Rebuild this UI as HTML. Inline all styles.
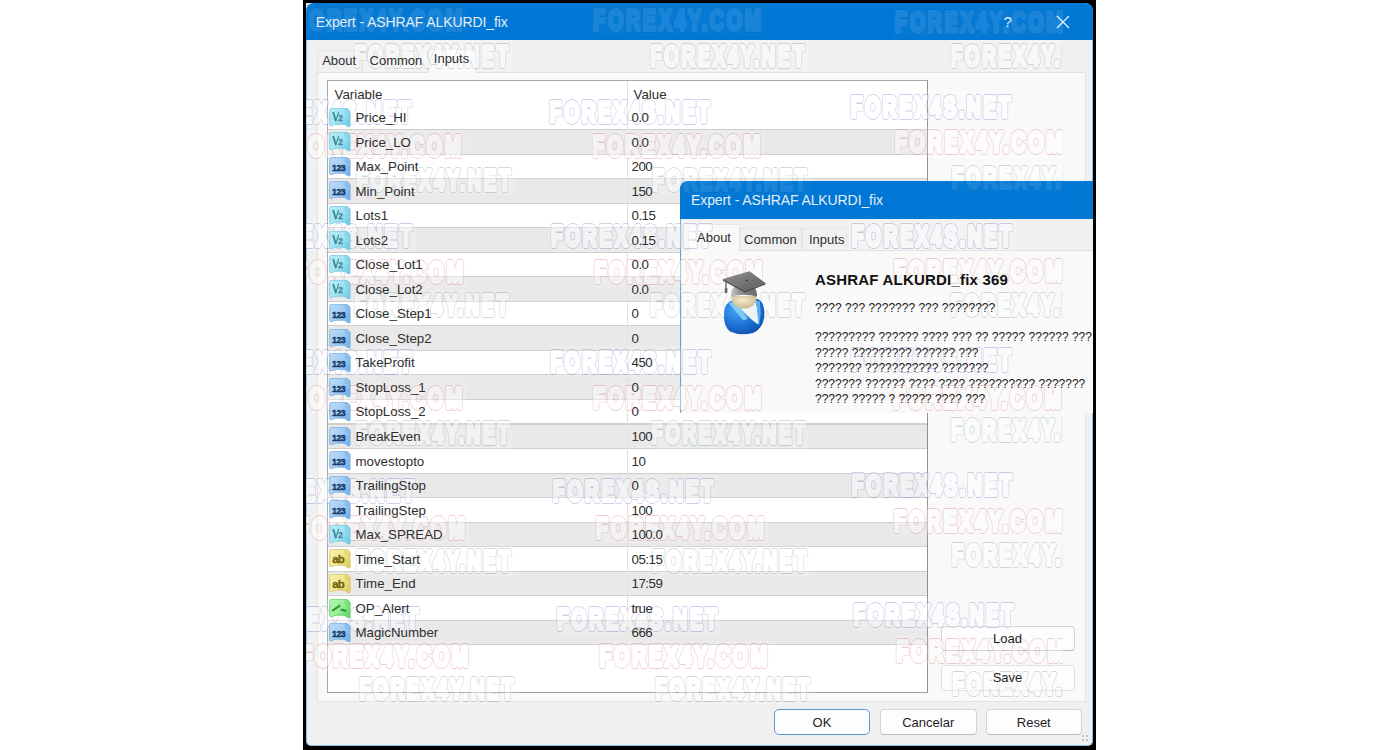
<!DOCTYPE html>
<html><head><meta charset="utf-8">
<style>
* { margin:0; padding:0; box-sizing:border-box; }
html, body { width:1400px; height:750px; overflow:hidden; background:#fff; }
body { position:relative; font-family:"Liberation Sans", sans-serif; color:#1e1e1e; }
.bg, .fg { position:absolute; }
.bg { z-index:1; }
.bg2 { position:absolute; z-index:2; }
.fg { z-index:10; white-space:nowrap; }
#frame { left:303px; top:0; width:793px; height:750px; background:#000; }
#win { left:306px; top:3px; width:787px; height:743px; background:#f0f0f0;
  border-radius:8px 8px 5px 5px; border:1px solid #86c2f2; border-top:none; }
#title { left:306px; top:3px; width:787px; height:37px; background:#0078d4; border-radius:8px 8px 0 0; }
.ttxt { font-size:14px; color:#e2eefa; letter-spacing:-0.1px; }
#page { left:316.5px; top:71.5px; width:769px; height:630.5px; background:#f9f9f9; border:1px solid #e2e2e2; }
.tab { height:22px; background:#f0f0f0; border:1px solid #e6e6e6; border-bottom:none; }
.tab.sel { background:#f9f9f9; }
.tt { font-size:13px; color:#2e2e2e; }
#table { left:326.8px; top:80px; width:601.7px; height:613px; background:#fff; border:1px solid #a8a8a8; border-right-color:#909090; border-bottom-color:#a0a0a0; }
.gr { left:327.8px; width:599.7px; background:#e9e9e9; }
.sep { left:327.8px; width:599.7px; height:1.1px; background:#cfcfcf; }
.t { font-size:13.3px; color:#2e2e2e; }
#coldiv { left:626.5px; top:81px; width:1px; height:563.5px; background:#e2e2e2; }
.btn { background:#fdfdfd; border:1px solid #d3d3d3; border-bottom-color:#bcbcbc; border-radius:4px; }
.bt { font-size:13px; color:#1e1e1e; text-align:center; }
#d2 { left:680px; top:181px; width:413px; height:232px; background:#f0f0f0; border-left:1.5px solid #5d9bd0; border-radius:8px 0 0 0; }
#d2title { left:680px; top:181px; width:413px; height:37.5px; background:#0078d4; border-radius:8px 0 0 0; }
#d2page { left:681.5px; top:249.5px; width:411.5px; height:163.5px; background:#f9f9f9; border-top:1px solid #e0e0e0; }
.q { font-size:12px; color:#1a1a1a; }
#wmsvg { position:absolute; left:0; top:0; z-index:5; pointer-events:none; }
</style></head>
<body>
<svg width="0" height="0" style="position:absolute">
 <defs>
  <linearGradient id="gh" x1="0" y1="0" x2="1" y2="0.6"><stop offset="0" stop-color="#b8eef9"/><stop offset="0.6" stop-color="#a2e3f4"/><stop offset="1" stop-color="#76cde6"/></linearGradient>
  <linearGradient id="gi" x1="0" y1="0" x2="1" y2="0.6"><stop offset="0" stop-color="#bcdcf8"/><stop offset="0.6" stop-color="#a4cdf3"/><stop offset="1" stop-color="#78b4ea"/></linearGradient>
  <linearGradient id="gs" x1="0" y1="0" x2="1" y2="0.6"><stop offset="0" stop-color="#f9f1b0"/><stop offset="0.6" stop-color="#f2e68e"/><stop offset="1" stop-color="#e2d160"/></linearGradient>
  <linearGradient id="gb" x1="0" y1="0" x2="1" y2="0.6"><stop offset="0" stop-color="#b4f6b4"/><stop offset="0.6" stop-color="#98ee98"/><stop offset="1" stop-color="#6cd86c"/></linearGradient>
 </defs>
</svg>

<div id="frame" class="bg"></div>
<div id="win" class="bg"></div>
<div class="bg" style="left:306px;top:3px;width:8px;height:8px;background:#dfe6ee"></div>
<div id="title" class="bg"></div>
<div class="fg ttxt" style="left:315.8px;top:13.5px">Expert - ASHRAF ALKURDI_fix</div>
<div class="fg ttxt" style="left:1003.5px;top:12.5px;font-size:15px">?</div>
<svg class="fg" style="left:1056px;top:14.5px" width="14" height="14" viewBox="0 0 14 14"><path d="M1 1 L13 13 M13 1 L1 13" stroke="#e6f2fc" stroke-width="1.3"/></svg>

<div id="page" class="bg"></div>
<div class="bg tab" style="left:316.5px;top:50px;width:45px"></div>
<div class="bg tab" style="left:361.5px;top:50px;width:66px"></div>
<div class="bg tab sel" style="left:427.5px;top:48.5px;width:48.5px;height:24px"></div>
<div class="fg tt" style="left:322.2px;top:53.2px">About</div>
<div class="fg tt" style="left:369.6px;top:53.2px">Common</div>
<div class="fg tt" style="left:433.8px;top:51.2px">Inputs</div>

<div id="table" class="bg"></div>
<div class="bg gr" style="top:129.23px;height:24.53px"></div>
<div class="bg gr" style="top:178.29px;height:24.53px"></div>
<div class="bg gr" style="top:227.35px;height:24.53px"></div>
<div class="bg gr" style="top:276.41px;height:24.53px"></div>
<div class="bg gr" style="top:325.47px;height:24.53px"></div>
<div class="bg gr" style="top:374.53px;height:24.53px"></div>
<div class="bg gr" style="top:423.59px;height:24.53px"></div>
<div class="bg gr" style="top:472.65px;height:24.53px"></div>
<div class="bg gr" style="top:521.71px;height:24.53px"></div>
<div class="bg gr" style="top:570.77px;height:24.53px"></div>
<div class="bg gr" style="top:619.83px;height:24.53px"></div>
<div class="bg sep" style="top:129.08px"></div>
<div class="bg sep" style="top:153.61px"></div>
<div class="bg sep" style="top:178.14px"></div>
<div class="bg sep" style="top:202.67px"></div>
<div class="bg sep" style="top:227.20px"></div>
<div class="bg sep" style="top:251.73px"></div>
<div class="bg sep" style="top:276.26px"></div>
<div class="bg sep" style="top:300.79px"></div>
<div class="bg sep" style="top:325.32px"></div>
<div class="bg sep" style="top:349.85px"></div>
<div class="bg sep" style="top:374.38px"></div>
<div class="bg sep" style="top:398.91px"></div>
<div class="bg sep" style="top:423.44px"></div>
<div class="bg sep" style="top:447.97px"></div>
<div class="bg sep" style="top:472.50px"></div>
<div class="bg sep" style="top:497.03px"></div>
<div class="bg sep" style="top:521.56px"></div>
<div class="bg sep" style="top:546.09px"></div>
<div class="bg sep" style="top:570.62px"></div>
<div class="bg sep" style="top:595.15px"></div>
<div class="bg sep" style="top:619.68px"></div>
<div class="bg sep" style="top:644.21px"></div>
<div id="coldiv" class="bg"></div>
<svg class="fg" style="left:328.80px;top:107.90px" width="22" height="20" viewBox="0 0 22 20"><path d="M0.7 2.3 Q0.7 0.3 2.7 0.3 L16.5 0.3 Q18 0.3 19.5 1.6 L20.2 2.3 Q21.1 3.2 21.1 4.8 L21.1 18 Q21.1 19.3 19.8 19 Q18 18.4 16.5 17 Q15.5 16.2 13 16.2 L8 16.2 Q5.5 16.2 4.3 17 Q3 17.9 1.8 17.8 Q0.7 17.6 0.7 16.5 Z" fill="url(#gh)" stroke="#74c6de" stroke-width="0.8"/><path d="M16.2 0.6 L16.2 4 Q16.2 5.2 17.4 5.2 L21 5.2 Q21 3.2 19.8 2 Q18.2 0.6 16.2 0.6 Z" fill="#8fd6ea" stroke="#74c6de" stroke-width="0.6" opacity="0.8"/><path d="M4.3 4.6 L6.7 12.6" stroke="#3d8a98" stroke-width="1.9" stroke-linecap="round"/><path d="M6.9 12.4 L9.6 4.4" stroke="#3d8a98" stroke-width="1.2" stroke-linecap="round"/><text x="9.2" y="12.8" font-size="8.2" font-family="Liberation Sans" fill="#3d8a98" stroke="#3d8a98" stroke-width="0.3" font-weight="bold">2</text></svg>
<div class="fg t" style="left:355.5px;top:110.10px">Price_HI</div>
<div class="fg t" style="left:631.5px;top:110.10px;letter-spacing:-0.5px">0.0</div>
<svg class="fg" style="left:328.80px;top:132.43px" width="22" height="20" viewBox="0 0 22 20"><path d="M0.7 2.3 Q0.7 0.3 2.7 0.3 L16.5 0.3 Q18 0.3 19.5 1.6 L20.2 2.3 Q21.1 3.2 21.1 4.8 L21.1 18 Q21.1 19.3 19.8 19 Q18 18.4 16.5 17 Q15.5 16.2 13 16.2 L8 16.2 Q5.5 16.2 4.3 17 Q3 17.9 1.8 17.8 Q0.7 17.6 0.7 16.5 Z" fill="url(#gh)" stroke="#74c6de" stroke-width="0.8"/><path d="M16.2 0.6 L16.2 4 Q16.2 5.2 17.4 5.2 L21 5.2 Q21 3.2 19.8 2 Q18.2 0.6 16.2 0.6 Z" fill="#8fd6ea" stroke="#74c6de" stroke-width="0.6" opacity="0.8"/><path d="M4.3 4.6 L6.7 12.6" stroke="#3d8a98" stroke-width="1.9" stroke-linecap="round"/><path d="M6.9 12.4 L9.6 4.4" stroke="#3d8a98" stroke-width="1.2" stroke-linecap="round"/><text x="9.2" y="12.8" font-size="8.2" font-family="Liberation Sans" fill="#3d8a98" stroke="#3d8a98" stroke-width="0.3" font-weight="bold">2</text></svg>
<div class="fg t" style="left:355.5px;top:134.63px">Price_LO</div>
<div class="fg t" style="left:631.5px;top:134.63px;letter-spacing:-0.5px">0.0</div>
<svg class="fg" style="left:328.80px;top:156.96px" width="22" height="20" viewBox="0 0 22 20"><path d="M0.7 2.3 Q0.7 0.3 2.7 0.3 L16.5 0.3 Q18 0.3 19.5 1.6 L20.2 2.3 Q21.1 3.2 21.1 4.8 L21.1 18 Q21.1 19.3 19.8 19 Q18 18.4 16.5 17 Q15.5 16.2 13 16.2 L8 16.2 Q5.5 16.2 4.3 17 Q3 17.9 1.8 17.8 Q0.7 17.6 0.7 16.5 Z" fill="url(#gi)" stroke="#72ade4" stroke-width="0.8"/><path d="M16.2 0.6 L16.2 4 Q16.2 5.2 17.4 5.2 L21 5.2 Q21 3.2 19.8 2 Q18.2 0.6 16.2 0.6 Z" fill="#8cbfee" stroke="#72ade4" stroke-width="0.6" opacity="0.8"/><text x="3.1" y="13.7" font-size="8.75" font-family="Liberation Sans" fill="#173c6a" stroke="#173c6a" stroke-width="0.45" font-weight="bold" letter-spacing="-0.55">123</text></svg>
<div class="fg t" style="left:355.5px;top:159.16px">Max_Point</div>
<div class="fg t" style="left:631.5px;top:159.16px;letter-spacing:-0.5px">200</div>
<svg class="fg" style="left:328.80px;top:181.49px" width="22" height="20" viewBox="0 0 22 20"><path d="M0.7 2.3 Q0.7 0.3 2.7 0.3 L16.5 0.3 Q18 0.3 19.5 1.6 L20.2 2.3 Q21.1 3.2 21.1 4.8 L21.1 18 Q21.1 19.3 19.8 19 Q18 18.4 16.5 17 Q15.5 16.2 13 16.2 L8 16.2 Q5.5 16.2 4.3 17 Q3 17.9 1.8 17.8 Q0.7 17.6 0.7 16.5 Z" fill="url(#gi)" stroke="#72ade4" stroke-width="0.8"/><path d="M16.2 0.6 L16.2 4 Q16.2 5.2 17.4 5.2 L21 5.2 Q21 3.2 19.8 2 Q18.2 0.6 16.2 0.6 Z" fill="#8cbfee" stroke="#72ade4" stroke-width="0.6" opacity="0.8"/><text x="3.1" y="13.7" font-size="8.75" font-family="Liberation Sans" fill="#173c6a" stroke="#173c6a" stroke-width="0.45" font-weight="bold" letter-spacing="-0.55">123</text></svg>
<div class="fg t" style="left:355.5px;top:183.69px">Min_Point</div>
<div class="fg t" style="left:631.5px;top:183.69px;letter-spacing:-0.5px">150</div>
<svg class="fg" style="left:328.80px;top:206.02px" width="22" height="20" viewBox="0 0 22 20"><path d="M0.7 2.3 Q0.7 0.3 2.7 0.3 L16.5 0.3 Q18 0.3 19.5 1.6 L20.2 2.3 Q21.1 3.2 21.1 4.8 L21.1 18 Q21.1 19.3 19.8 19 Q18 18.4 16.5 17 Q15.5 16.2 13 16.2 L8 16.2 Q5.5 16.2 4.3 17 Q3 17.9 1.8 17.8 Q0.7 17.6 0.7 16.5 Z" fill="url(#gh)" stroke="#74c6de" stroke-width="0.8"/><path d="M16.2 0.6 L16.2 4 Q16.2 5.2 17.4 5.2 L21 5.2 Q21 3.2 19.8 2 Q18.2 0.6 16.2 0.6 Z" fill="#8fd6ea" stroke="#74c6de" stroke-width="0.6" opacity="0.8"/><path d="M4.3 4.6 L6.7 12.6" stroke="#3d8a98" stroke-width="1.9" stroke-linecap="round"/><path d="M6.9 12.4 L9.6 4.4" stroke="#3d8a98" stroke-width="1.2" stroke-linecap="round"/><text x="9.2" y="12.8" font-size="8.2" font-family="Liberation Sans" fill="#3d8a98" stroke="#3d8a98" stroke-width="0.3" font-weight="bold">2</text></svg>
<div class="fg t" style="left:355.5px;top:208.22px">Lots1</div>
<div class="fg t" style="left:631.5px;top:208.22px;letter-spacing:-0.5px">0.15</div>
<svg class="fg" style="left:328.80px;top:230.55px" width="22" height="20" viewBox="0 0 22 20"><path d="M0.7 2.3 Q0.7 0.3 2.7 0.3 L16.5 0.3 Q18 0.3 19.5 1.6 L20.2 2.3 Q21.1 3.2 21.1 4.8 L21.1 18 Q21.1 19.3 19.8 19 Q18 18.4 16.5 17 Q15.5 16.2 13 16.2 L8 16.2 Q5.5 16.2 4.3 17 Q3 17.9 1.8 17.8 Q0.7 17.6 0.7 16.5 Z" fill="url(#gh)" stroke="#74c6de" stroke-width="0.8"/><path d="M16.2 0.6 L16.2 4 Q16.2 5.2 17.4 5.2 L21 5.2 Q21 3.2 19.8 2 Q18.2 0.6 16.2 0.6 Z" fill="#8fd6ea" stroke="#74c6de" stroke-width="0.6" opacity="0.8"/><path d="M4.3 4.6 L6.7 12.6" stroke="#3d8a98" stroke-width="1.9" stroke-linecap="round"/><path d="M6.9 12.4 L9.6 4.4" stroke="#3d8a98" stroke-width="1.2" stroke-linecap="round"/><text x="9.2" y="12.8" font-size="8.2" font-family="Liberation Sans" fill="#3d8a98" stroke="#3d8a98" stroke-width="0.3" font-weight="bold">2</text></svg>
<div class="fg t" style="left:355.5px;top:232.75px">Lots2</div>
<div class="fg t" style="left:631.5px;top:232.75px;letter-spacing:-0.5px">0.15</div>
<svg class="fg" style="left:328.80px;top:255.08px" width="22" height="20" viewBox="0 0 22 20"><path d="M0.7 2.3 Q0.7 0.3 2.7 0.3 L16.5 0.3 Q18 0.3 19.5 1.6 L20.2 2.3 Q21.1 3.2 21.1 4.8 L21.1 18 Q21.1 19.3 19.8 19 Q18 18.4 16.5 17 Q15.5 16.2 13 16.2 L8 16.2 Q5.5 16.2 4.3 17 Q3 17.9 1.8 17.8 Q0.7 17.6 0.7 16.5 Z" fill="url(#gh)" stroke="#74c6de" stroke-width="0.8"/><path d="M16.2 0.6 L16.2 4 Q16.2 5.2 17.4 5.2 L21 5.2 Q21 3.2 19.8 2 Q18.2 0.6 16.2 0.6 Z" fill="#8fd6ea" stroke="#74c6de" stroke-width="0.6" opacity="0.8"/><path d="M4.3 4.6 L6.7 12.6" stroke="#3d8a98" stroke-width="1.9" stroke-linecap="round"/><path d="M6.9 12.4 L9.6 4.4" stroke="#3d8a98" stroke-width="1.2" stroke-linecap="round"/><text x="9.2" y="12.8" font-size="8.2" font-family="Liberation Sans" fill="#3d8a98" stroke="#3d8a98" stroke-width="0.3" font-weight="bold">2</text></svg>
<div class="fg t" style="left:355.5px;top:257.28px">Close_Lot1</div>
<div class="fg t" style="left:631.5px;top:257.28px;letter-spacing:-0.5px">0.0</div>
<svg class="fg" style="left:328.80px;top:279.61px" width="22" height="20" viewBox="0 0 22 20"><path d="M0.7 2.3 Q0.7 0.3 2.7 0.3 L16.5 0.3 Q18 0.3 19.5 1.6 L20.2 2.3 Q21.1 3.2 21.1 4.8 L21.1 18 Q21.1 19.3 19.8 19 Q18 18.4 16.5 17 Q15.5 16.2 13 16.2 L8 16.2 Q5.5 16.2 4.3 17 Q3 17.9 1.8 17.8 Q0.7 17.6 0.7 16.5 Z" fill="url(#gh)" stroke="#74c6de" stroke-width="0.8"/><path d="M16.2 0.6 L16.2 4 Q16.2 5.2 17.4 5.2 L21 5.2 Q21 3.2 19.8 2 Q18.2 0.6 16.2 0.6 Z" fill="#8fd6ea" stroke="#74c6de" stroke-width="0.6" opacity="0.8"/><path d="M4.3 4.6 L6.7 12.6" stroke="#3d8a98" stroke-width="1.9" stroke-linecap="round"/><path d="M6.9 12.4 L9.6 4.4" stroke="#3d8a98" stroke-width="1.2" stroke-linecap="round"/><text x="9.2" y="12.8" font-size="8.2" font-family="Liberation Sans" fill="#3d8a98" stroke="#3d8a98" stroke-width="0.3" font-weight="bold">2</text></svg>
<div class="fg t" style="left:355.5px;top:281.81px">Close_Lot2</div>
<div class="fg t" style="left:631.5px;top:281.81px;letter-spacing:-0.5px">0.0</div>
<svg class="fg" style="left:328.80px;top:304.14px" width="22" height="20" viewBox="0 0 22 20"><path d="M0.7 2.3 Q0.7 0.3 2.7 0.3 L16.5 0.3 Q18 0.3 19.5 1.6 L20.2 2.3 Q21.1 3.2 21.1 4.8 L21.1 18 Q21.1 19.3 19.8 19 Q18 18.4 16.5 17 Q15.5 16.2 13 16.2 L8 16.2 Q5.5 16.2 4.3 17 Q3 17.9 1.8 17.8 Q0.7 17.6 0.7 16.5 Z" fill="url(#gi)" stroke="#72ade4" stroke-width="0.8"/><path d="M16.2 0.6 L16.2 4 Q16.2 5.2 17.4 5.2 L21 5.2 Q21 3.2 19.8 2 Q18.2 0.6 16.2 0.6 Z" fill="#8cbfee" stroke="#72ade4" stroke-width="0.6" opacity="0.8"/><text x="3.1" y="13.7" font-size="8.75" font-family="Liberation Sans" fill="#173c6a" stroke="#173c6a" stroke-width="0.45" font-weight="bold" letter-spacing="-0.55">123</text></svg>
<div class="fg t" style="left:355.5px;top:306.34px">Close_Step1</div>
<div class="fg t" style="left:631.5px;top:306.34px;letter-spacing:-0.5px">0</div>
<svg class="fg" style="left:328.80px;top:328.67px" width="22" height="20" viewBox="0 0 22 20"><path d="M0.7 2.3 Q0.7 0.3 2.7 0.3 L16.5 0.3 Q18 0.3 19.5 1.6 L20.2 2.3 Q21.1 3.2 21.1 4.8 L21.1 18 Q21.1 19.3 19.8 19 Q18 18.4 16.5 17 Q15.5 16.2 13 16.2 L8 16.2 Q5.5 16.2 4.3 17 Q3 17.9 1.8 17.8 Q0.7 17.6 0.7 16.5 Z" fill="url(#gi)" stroke="#72ade4" stroke-width="0.8"/><path d="M16.2 0.6 L16.2 4 Q16.2 5.2 17.4 5.2 L21 5.2 Q21 3.2 19.8 2 Q18.2 0.6 16.2 0.6 Z" fill="#8cbfee" stroke="#72ade4" stroke-width="0.6" opacity="0.8"/><text x="3.1" y="13.7" font-size="8.75" font-family="Liberation Sans" fill="#173c6a" stroke="#173c6a" stroke-width="0.45" font-weight="bold" letter-spacing="-0.55">123</text></svg>
<div class="fg t" style="left:355.5px;top:330.87px">Close_Step2</div>
<div class="fg t" style="left:631.5px;top:330.87px;letter-spacing:-0.5px">0</div>
<svg class="fg" style="left:328.80px;top:353.20px" width="22" height="20" viewBox="0 0 22 20"><path d="M0.7 2.3 Q0.7 0.3 2.7 0.3 L16.5 0.3 Q18 0.3 19.5 1.6 L20.2 2.3 Q21.1 3.2 21.1 4.8 L21.1 18 Q21.1 19.3 19.8 19 Q18 18.4 16.5 17 Q15.5 16.2 13 16.2 L8 16.2 Q5.5 16.2 4.3 17 Q3 17.9 1.8 17.8 Q0.7 17.6 0.7 16.5 Z" fill="url(#gi)" stroke="#72ade4" stroke-width="0.8"/><path d="M16.2 0.6 L16.2 4 Q16.2 5.2 17.4 5.2 L21 5.2 Q21 3.2 19.8 2 Q18.2 0.6 16.2 0.6 Z" fill="#8cbfee" stroke="#72ade4" stroke-width="0.6" opacity="0.8"/><text x="3.1" y="13.7" font-size="8.75" font-family="Liberation Sans" fill="#173c6a" stroke="#173c6a" stroke-width="0.45" font-weight="bold" letter-spacing="-0.55">123</text></svg>
<div class="fg t" style="left:355.5px;top:355.40px">TakeProfit</div>
<div class="fg t" style="left:631.5px;top:355.40px;letter-spacing:-0.5px">450</div>
<svg class="fg" style="left:328.80px;top:377.73px" width="22" height="20" viewBox="0 0 22 20"><path d="M0.7 2.3 Q0.7 0.3 2.7 0.3 L16.5 0.3 Q18 0.3 19.5 1.6 L20.2 2.3 Q21.1 3.2 21.1 4.8 L21.1 18 Q21.1 19.3 19.8 19 Q18 18.4 16.5 17 Q15.5 16.2 13 16.2 L8 16.2 Q5.5 16.2 4.3 17 Q3 17.9 1.8 17.8 Q0.7 17.6 0.7 16.5 Z" fill="url(#gi)" stroke="#72ade4" stroke-width="0.8"/><path d="M16.2 0.6 L16.2 4 Q16.2 5.2 17.4 5.2 L21 5.2 Q21 3.2 19.8 2 Q18.2 0.6 16.2 0.6 Z" fill="#8cbfee" stroke="#72ade4" stroke-width="0.6" opacity="0.8"/><text x="3.1" y="13.7" font-size="8.75" font-family="Liberation Sans" fill="#173c6a" stroke="#173c6a" stroke-width="0.45" font-weight="bold" letter-spacing="-0.55">123</text></svg>
<div class="fg t" style="left:355.5px;top:379.93px">StopLoss_1</div>
<div class="fg t" style="left:631.5px;top:379.93px;letter-spacing:-0.5px">0</div>
<svg class="fg" style="left:328.80px;top:402.26px" width="22" height="20" viewBox="0 0 22 20"><path d="M0.7 2.3 Q0.7 0.3 2.7 0.3 L16.5 0.3 Q18 0.3 19.5 1.6 L20.2 2.3 Q21.1 3.2 21.1 4.8 L21.1 18 Q21.1 19.3 19.8 19 Q18 18.4 16.5 17 Q15.5 16.2 13 16.2 L8 16.2 Q5.5 16.2 4.3 17 Q3 17.9 1.8 17.8 Q0.7 17.6 0.7 16.5 Z" fill="url(#gi)" stroke="#72ade4" stroke-width="0.8"/><path d="M16.2 0.6 L16.2 4 Q16.2 5.2 17.4 5.2 L21 5.2 Q21 3.2 19.8 2 Q18.2 0.6 16.2 0.6 Z" fill="#8cbfee" stroke="#72ade4" stroke-width="0.6" opacity="0.8"/><text x="3.1" y="13.7" font-size="8.75" font-family="Liberation Sans" fill="#173c6a" stroke="#173c6a" stroke-width="0.45" font-weight="bold" letter-spacing="-0.55">123</text></svg>
<div class="fg t" style="left:355.5px;top:404.46px">StopLoss_2</div>
<div class="fg t" style="left:631.5px;top:404.46px;letter-spacing:-0.5px">0</div>
<svg class="fg" style="left:328.80px;top:426.79px" width="22" height="20" viewBox="0 0 22 20"><path d="M0.7 2.3 Q0.7 0.3 2.7 0.3 L16.5 0.3 Q18 0.3 19.5 1.6 L20.2 2.3 Q21.1 3.2 21.1 4.8 L21.1 18 Q21.1 19.3 19.8 19 Q18 18.4 16.5 17 Q15.5 16.2 13 16.2 L8 16.2 Q5.5 16.2 4.3 17 Q3 17.9 1.8 17.8 Q0.7 17.6 0.7 16.5 Z" fill="url(#gi)" stroke="#72ade4" stroke-width="0.8"/><path d="M16.2 0.6 L16.2 4 Q16.2 5.2 17.4 5.2 L21 5.2 Q21 3.2 19.8 2 Q18.2 0.6 16.2 0.6 Z" fill="#8cbfee" stroke="#72ade4" stroke-width="0.6" opacity="0.8"/><text x="3.1" y="13.7" font-size="8.75" font-family="Liberation Sans" fill="#173c6a" stroke="#173c6a" stroke-width="0.45" font-weight="bold" letter-spacing="-0.55">123</text></svg>
<div class="fg t" style="left:355.5px;top:428.99px">BreakEven</div>
<div class="fg t" style="left:631.5px;top:428.99px;letter-spacing:-0.5px">100</div>
<svg class="fg" style="left:328.80px;top:451.32px" width="22" height="20" viewBox="0 0 22 20"><path d="M0.7 2.3 Q0.7 0.3 2.7 0.3 L16.5 0.3 Q18 0.3 19.5 1.6 L20.2 2.3 Q21.1 3.2 21.1 4.8 L21.1 18 Q21.1 19.3 19.8 19 Q18 18.4 16.5 17 Q15.5 16.2 13 16.2 L8 16.2 Q5.5 16.2 4.3 17 Q3 17.9 1.8 17.8 Q0.7 17.6 0.7 16.5 Z" fill="url(#gi)" stroke="#72ade4" stroke-width="0.8"/><path d="M16.2 0.6 L16.2 4 Q16.2 5.2 17.4 5.2 L21 5.2 Q21 3.2 19.8 2 Q18.2 0.6 16.2 0.6 Z" fill="#8cbfee" stroke="#72ade4" stroke-width="0.6" opacity="0.8"/><text x="3.1" y="13.7" font-size="8.75" font-family="Liberation Sans" fill="#173c6a" stroke="#173c6a" stroke-width="0.45" font-weight="bold" letter-spacing="-0.55">123</text></svg>
<div class="fg t" style="left:355.5px;top:453.52px">movestopto</div>
<div class="fg t" style="left:631.5px;top:453.52px;letter-spacing:-0.5px">10</div>
<svg class="fg" style="left:328.80px;top:475.85px" width="22" height="20" viewBox="0 0 22 20"><path d="M0.7 2.3 Q0.7 0.3 2.7 0.3 L16.5 0.3 Q18 0.3 19.5 1.6 L20.2 2.3 Q21.1 3.2 21.1 4.8 L21.1 18 Q21.1 19.3 19.8 19 Q18 18.4 16.5 17 Q15.5 16.2 13 16.2 L8 16.2 Q5.5 16.2 4.3 17 Q3 17.9 1.8 17.8 Q0.7 17.6 0.7 16.5 Z" fill="url(#gi)" stroke="#72ade4" stroke-width="0.8"/><path d="M16.2 0.6 L16.2 4 Q16.2 5.2 17.4 5.2 L21 5.2 Q21 3.2 19.8 2 Q18.2 0.6 16.2 0.6 Z" fill="#8cbfee" stroke="#72ade4" stroke-width="0.6" opacity="0.8"/><text x="3.1" y="13.7" font-size="8.75" font-family="Liberation Sans" fill="#173c6a" stroke="#173c6a" stroke-width="0.45" font-weight="bold" letter-spacing="-0.55">123</text></svg>
<div class="fg t" style="left:355.5px;top:478.05px">TrailingStop</div>
<div class="fg t" style="left:631.5px;top:478.05px;letter-spacing:-0.5px">0</div>
<svg class="fg" style="left:328.80px;top:500.38px" width="22" height="20" viewBox="0 0 22 20"><path d="M0.7 2.3 Q0.7 0.3 2.7 0.3 L16.5 0.3 Q18 0.3 19.5 1.6 L20.2 2.3 Q21.1 3.2 21.1 4.8 L21.1 18 Q21.1 19.3 19.8 19 Q18 18.4 16.5 17 Q15.5 16.2 13 16.2 L8 16.2 Q5.5 16.2 4.3 17 Q3 17.9 1.8 17.8 Q0.7 17.6 0.7 16.5 Z" fill="url(#gi)" stroke="#72ade4" stroke-width="0.8"/><path d="M16.2 0.6 L16.2 4 Q16.2 5.2 17.4 5.2 L21 5.2 Q21 3.2 19.8 2 Q18.2 0.6 16.2 0.6 Z" fill="#8cbfee" stroke="#72ade4" stroke-width="0.6" opacity="0.8"/><text x="3.1" y="13.7" font-size="8.75" font-family="Liberation Sans" fill="#173c6a" stroke="#173c6a" stroke-width="0.45" font-weight="bold" letter-spacing="-0.55">123</text></svg>
<div class="fg t" style="left:355.5px;top:502.58px">TrailingStep</div>
<div class="fg t" style="left:631.5px;top:502.58px;letter-spacing:-0.5px">100</div>
<svg class="fg" style="left:328.80px;top:524.91px" width="22" height="20" viewBox="0 0 22 20"><path d="M0.7 2.3 Q0.7 0.3 2.7 0.3 L16.5 0.3 Q18 0.3 19.5 1.6 L20.2 2.3 Q21.1 3.2 21.1 4.8 L21.1 18 Q21.1 19.3 19.8 19 Q18 18.4 16.5 17 Q15.5 16.2 13 16.2 L8 16.2 Q5.5 16.2 4.3 17 Q3 17.9 1.8 17.8 Q0.7 17.6 0.7 16.5 Z" fill="url(#gh)" stroke="#74c6de" stroke-width="0.8"/><path d="M16.2 0.6 L16.2 4 Q16.2 5.2 17.4 5.2 L21 5.2 Q21 3.2 19.8 2 Q18.2 0.6 16.2 0.6 Z" fill="#8fd6ea" stroke="#74c6de" stroke-width="0.6" opacity="0.8"/><path d="M4.3 4.6 L6.7 12.6" stroke="#3d8a98" stroke-width="1.9" stroke-linecap="round"/><path d="M6.9 12.4 L9.6 4.4" stroke="#3d8a98" stroke-width="1.2" stroke-linecap="round"/><text x="9.2" y="12.8" font-size="8.2" font-family="Liberation Sans" fill="#3d8a98" stroke="#3d8a98" stroke-width="0.3" font-weight="bold">2</text></svg>
<div class="fg t" style="left:355.5px;top:527.11px">Max_SPREAD</div>
<div class="fg t" style="left:631.5px;top:527.11px;letter-spacing:-0.5px">100.0</div>
<svg class="fg" style="left:328.80px;top:549.44px" width="22" height="20" viewBox="0 0 22 20"><path d="M0.7 2.3 Q0.7 0.3 2.7 0.3 L16.5 0.3 Q18 0.3 19.5 1.6 L20.2 2.3 Q21.1 3.2 21.1 4.8 L21.1 18 Q21.1 19.3 19.8 19 Q18 18.4 16.5 17 Q15.5 16.2 13 16.2 L8 16.2 Q5.5 16.2 4.3 17 Q3 17.9 1.8 17.8 Q0.7 17.6 0.7 16.5 Z" fill="url(#gs)" stroke="#d2c264" stroke-width="0.8"/><path d="M16.2 0.6 L16.2 4 Q16.2 5.2 17.4 5.2 L21 5.2 Q21 3.2 19.8 2 Q18.2 0.6 16.2 0.6 Z" fill="#e8da70" stroke="#d2c264" stroke-width="0.6" opacity="0.8"/><text x="3.2" y="13.6" font-size="11.5" font-family="Liberation Sans" fill="#6f6410" stroke="#6f6410" stroke-width="0.3" font-weight="bold" letter-spacing="-0.8">ab</text></svg>
<div class="fg t" style="left:355.5px;top:551.64px">Time_Start</div>
<div class="fg t" style="left:631.5px;top:551.64px;letter-spacing:-0.5px">05:15</div>
<svg class="fg" style="left:328.80px;top:573.97px" width="22" height="20" viewBox="0 0 22 20"><path d="M0.7 2.3 Q0.7 0.3 2.7 0.3 L16.5 0.3 Q18 0.3 19.5 1.6 L20.2 2.3 Q21.1 3.2 21.1 4.8 L21.1 18 Q21.1 19.3 19.8 19 Q18 18.4 16.5 17 Q15.5 16.2 13 16.2 L8 16.2 Q5.5 16.2 4.3 17 Q3 17.9 1.8 17.8 Q0.7 17.6 0.7 16.5 Z" fill="url(#gs)" stroke="#d2c264" stroke-width="0.8"/><path d="M16.2 0.6 L16.2 4 Q16.2 5.2 17.4 5.2 L21 5.2 Q21 3.2 19.8 2 Q18.2 0.6 16.2 0.6 Z" fill="#e8da70" stroke="#d2c264" stroke-width="0.6" opacity="0.8"/><text x="3.2" y="13.6" font-size="11.5" font-family="Liberation Sans" fill="#6f6410" stroke="#6f6410" stroke-width="0.3" font-weight="bold" letter-spacing="-0.8">ab</text></svg>
<div class="fg t" style="left:355.5px;top:576.17px">Time_End</div>
<div class="fg t" style="left:631.5px;top:576.17px;letter-spacing:-0.5px">17:59</div>
<svg class="fg" style="left:328.80px;top:598.50px" width="22" height="20" viewBox="0 0 22 20"><path d="M0.7 2.3 Q0.7 0.3 2.7 0.3 L16.5 0.3 Q18 0.3 19.5 1.6 L20.2 2.3 Q21.1 3.2 21.1 4.8 L21.1 18 Q21.1 19.3 19.8 19 Q18 18.4 16.5 17 Q15.5 16.2 13 16.2 L8 16.2 Q5.5 16.2 4.3 17 Q3 17.9 1.8 17.8 Q0.7 17.6 0.7 16.5 Z" fill="url(#gb)" stroke="#62cc62" stroke-width="0.8"/><path d="M16.2 0.6 L16.2 4 Q16.2 5.2 17.4 5.2 L21 5.2 Q21 3.2 19.8 2 Q18.2 0.6 16.2 0.6 Z" fill="#7ae07a" stroke="#62cc62" stroke-width="0.6" opacity="0.8"/><path d="M3.9 11.4 L10.6 6.8 M12.5 10.8 L16.5 11.8" stroke="#2a962a" stroke-width="2.1" stroke-linecap="round"/></svg>
<div class="fg t" style="left:355.5px;top:600.70px">OP_Alert</div>
<div class="fg t" style="left:631.5px;top:600.70px;letter-spacing:-0.5px">true</div>
<svg class="fg" style="left:328.80px;top:623.03px" width="22" height="20" viewBox="0 0 22 20"><path d="M0.7 2.3 Q0.7 0.3 2.7 0.3 L16.5 0.3 Q18 0.3 19.5 1.6 L20.2 2.3 Q21.1 3.2 21.1 4.8 L21.1 18 Q21.1 19.3 19.8 19 Q18 18.4 16.5 17 Q15.5 16.2 13 16.2 L8 16.2 Q5.5 16.2 4.3 17 Q3 17.9 1.8 17.8 Q0.7 17.6 0.7 16.5 Z" fill="url(#gi)" stroke="#72ade4" stroke-width="0.8"/><path d="M16.2 0.6 L16.2 4 Q16.2 5.2 17.4 5.2 L21 5.2 Q21 3.2 19.8 2 Q18.2 0.6 16.2 0.6 Z" fill="#8cbfee" stroke="#72ade4" stroke-width="0.6" opacity="0.8"/><text x="3.1" y="13.7" font-size="8.75" font-family="Liberation Sans" fill="#173c6a" stroke="#173c6a" stroke-width="0.45" font-weight="bold" letter-spacing="-0.55">123</text></svg>
<div class="fg t" style="left:355.5px;top:625.23px">MagicNumber</div>
<div class="fg t" style="left:631.5px;top:625.23px;letter-spacing:-0.5px">666</div>
<div class="fg t" style="left:334.5px;top:86.8px">Variable</div>
<div class="fg t" style="left:633.5px;top:86.8px">Value</div>

<div class="bg btn" style="left:940.5px;top:625.5px;width:134px;height:25.5px"></div>
<div class="fg bt" style="left:940.5px;top:630.5px;width:134px">Load</div>
<div class="bg btn" style="left:940.5px;top:665px;width:134px;height:25.5px;border-color:#dedede"></div>
<div class="fg bt" style="left:940.5px;top:670px;width:134px">Save</div>
<div class="bg btn" style="left:774px;top:709px;width:96px;height:26px;border:1.6px solid #5f97cf;border-radius:5px"></div>
<div class="fg bt" style="left:774px;top:714.5px;width:96px">OK</div>
<div class="bg btn" style="left:880px;top:709px;width:96.5px;height:26px"></div>
<div class="fg bt" style="left:880px;top:714.5px;width:96.5px">Cancelar</div>
<div class="bg btn" style="left:986px;top:709px;width:95.5px;height:26px"></div>
<div class="fg bt" style="left:986px;top:714.5px;width:95.5px">Reset</div>
<svg class="fg" style="left:1080px;top:733px" width="12" height="12" viewBox="0 0 12 12"><g fill="#b8c4d0"><rect x="2" y="2" width="2" height="2"/><rect x="6" y="2" width="2" height="2"/><rect x="2" y="6" width="2" height="2"/><rect x="6" y="6" width="2" height="2"/></g></svg>

<!-- second dialog -->
<div id="d2" class="bg2"></div>
<div id="d2title" class="bg2"></div>
<div id="d2page" class="bg2"></div>
<div class="bg2 tab" style="left:739.5px;top:228px;width:62.5px;height:22px"></div>
<div class="bg2 tab" style="left:802px;top:228px;width:45px;height:22px"></div>
<div class="bg2 tab sel" style="left:687.5px;top:224px;width:52px;height:26.5px"></div>
<div class="fg ttxt" style="left:691px;top:192px">Expert - ASHRAF ALKURDI_fix</div>
<div class="fg tt" style="left:697px;top:229.5px">About</div>
<div class="fg tt" style="left:744px;top:232px">Common</div>
<div class="fg tt" style="left:809px;top:232px">Inputs</div>

<svg class="fg" style="left:718px;top:266px" width="52" height="72" viewBox="0 0 52 72">
 <defs>
  <radialGradient id="body" cx="0.35" cy="0.3" r="0.8"><stop offset="0" stop-color="#4aa8f2"/><stop offset="0.55" stop-color="#1e74d6"/><stop offset="1" stop-color="#0c4ea8"/></radialGradient>
  <radialGradient id="face" cx="0.45" cy="0.35" r="0.7"><stop offset="0" stop-color="#f4ebcf"/><stop offset="1" stop-color="#c7b386"/></radialGradient>
  <linearGradient id="cap" x1="0" y1="0" x2="1" y2="1"><stop offset="0" stop-color="#8e8e8e"/><stop offset="1" stop-color="#5e5e5e"/></linearGradient>
  <linearGradient id="skull" x1="0" y1="0" x2="1" y2="0"><stop offset="0" stop-color="#c4c4c4"/><stop offset="0.4" stop-color="#8a8a8a"/><stop offset="1" stop-color="#6a6a6a"/></linearGradient>
 </defs>
 <path d="M8 39 Q13 33 21 33 L40 33 Q46 36 46.5 47 Q46.5 62 35 67 Q22 70 12 65.5 Q5.5 60 6 49 Q6 43 8 39 Z" fill="url(#body)"/>
 <path d="M18 37 L37.5 34 Q40.5 46 40 58.5 Q29 51 18 37 Z" fill="#eef3f8"/>
 <path d="M11 37.5 Q14 35 18 36.5 L29.5 52 Q27.5 55 25 54 Z" fill="#7ccaf8"/>
 <path d="M37 34 L42 35.5 Q43.5 47 41.5 58.5 L40 58.5 Q40.5 46 37 34 Z" fill="#58aef0"/>
 <path d="M13.5 30 Q13.5 42 26 42.5 Q38.5 42 38.5 30 Z" fill="url(#face)"/>
 <path d="M13 30.5 Q12.5 18 26 18 Q39.5 18 39 30.5 Q26 27 13 30.5 Z" fill="url(#skull)"/>
 <path d="M4.8 13 L31.5 5.2 L47.5 17 L27 25 Z" fill="url(#cap)"/>
 <path d="M4.8 13 L27 25 L47.5 17 L47.5 18.5 L27 26.8 L4.8 14.5 Z" fill="#4e4e4e"/>
 <ellipse cx="28.5" cy="14.5" rx="1.3" ry="0.8" fill="#3a3a3a"/>
 <path d="M8 14.5 L8 23" stroke="#505050" stroke-width="1.2"/>
 <rect x="6.8" y="22" width="2.6" height="5" rx="0.8" fill="#666"/>
</svg>
<div class="fg" style="left:815px;top:270.5px;font-size:15px;font-weight:bold;color:#111;letter-spacing:0.2px">ASHRAF ALKURDI_fix 369</div>
<div class="fg q" style="left:815px;top:301.2px">???? ??? ??????? ??? ????????</div>
<div class="fg q" style="left:815px;top:330.3px">????????? ?????? ???? ??? ?? ????? ?????? ???</div>
<div class="fg q" style="left:815px;top:345.8px">????? ????????? ?????? ???</div>
<div class="fg q" style="left:815px;top:361.3px">??????? ??????????? ???????</div>
<div class="fg q" style="left:815px;top:376.8px">??????? ?????? ???? ???? ?????????? ???????</div>
<div class="fg q" style="left:815px;top:392.3px">????? ????? ? ????? ???? ???</div>

<svg id="wmsvg" width="1400" height="750" viewBox="0 0 1400 750">
 <defs>
  <clipPath id="cbody"><path clip-rule="evenodd" d="M306 3 H1063 V704 H306 Z M306 3 H1063 V40 H306 Z M680 181 H1063 V218.5 H680 Z"/></clipPath>
  <clipPath id="ctitle"><path d="M306 3 H1063 V40 H306 Z M680 181 H1063 V218.5 H680 Z"/></clipPath>
  <g id="wmg"><g fill="#fff" opacity="0.35"><rect x="292.3" y="4.7" width="174" height="31"/><rect x="591.3" y="4.7" width="174" height="31"/><rect x="893.1" y="6.2" width="174" height="31"/><rect x="352.3" y="40.0" width="160" height="31"/><rect x="648.3" y="40.0" width="160" height="31"/><rect x="949.0" y="39.9" width="160" height="31"/><rect x="248.8" y="95.9" width="166" height="31"/><rect x="547.8" y="95.9" width="166" height="31"/><rect x="848.8" y="91.0" width="166" height="31"/><rect x="291.5" y="130.5" width="174" height="31"/><rect x="590.5" y="130.5" width="174" height="31"/><rect x="893.1" y="126.5" width="174" height="31"/><rect x="354.5" y="164.5" width="160" height="31"/><rect x="650.5" y="164.5" width="160" height="31"/><rect x="950.0" y="162.5" width="160" height="31"/><rect x="249.9" y="220.3" width="166" height="31"/><rect x="548.9" y="220.3" width="166" height="31"/><rect x="849.7" y="220.3" width="166" height="31"/><rect x="293.4" y="256.5" width="174" height="31"/><rect x="592.4" y="256.5" width="174" height="31"/><rect x="892.1" y="255.0" width="174" height="31"/><rect x="352.3" y="289.5" width="160" height="31"/><rect x="648.3" y="289.5" width="160" height="31"/><rect x="948.5" y="289.7" width="160" height="31"/><rect x="249.5" y="346.1" width="166" height="31"/><rect x="548.5" y="346.1" width="166" height="31"/><rect x="849.0" y="344.5" width="166" height="31"/><rect x="292.3" y="382.4" width="174" height="31"/><rect x="591.3" y="382.4" width="174" height="31"/><rect x="891.5" y="382.1" width="174" height="31"/><rect x="353.3" y="417.5" width="160" height="31"/><rect x="649.3" y="417.5" width="160" height="31"/><rect x="949.0" y="413.9" width="160" height="31"/><rect x="252.1" y="475.5" width="166" height="31"/><rect x="551.1" y="475.5" width="166" height="31"/><rect x="849.7" y="469.5" width="166" height="31"/><rect x="295.1" y="512.2" width="174" height="31"/><rect x="594.1" y="512.2" width="174" height="31"/><rect x="892.1" y="505.3" width="174" height="31"/><rect x="354.3" y="545.7" width="160" height="31"/><rect x="650.3" y="545.7" width="160" height="31"/><rect x="950.0" y="539.0" width="160" height="31"/><rect x="256.1" y="603.2" width="166" height="31"/><rect x="555.1" y="603.2" width="166" height="31"/><rect x="851.5" y="599.5" width="166" height="31"/><rect x="298.5" y="640.5" width="174" height="31"/><rect x="597.5" y="640.5" width="174" height="31"/><rect x="894.5" y="635.5" width="174" height="31"/><rect x="357.5" y="673.5" width="160" height="31"/><rect x="653.5" y="673.5" width="160" height="31"/><rect x="950.5" y="668.5" width="160" height="31"/></g><g font-family="Liberation Sans" font-weight="bold" font-size="29.5" letter-spacing="4" stroke-linejoin="round"><g fill="none" stroke-width="5.6"><text x="294.3" y="30.4" textLength="170.4" lengthAdjust="spacingAndGlyphs" stroke="#d48080">FOREX4Y.COM</text><text x="593.3" y="30.4" textLength="170.4" lengthAdjust="spacingAndGlyphs" stroke="#d48080">FOREX4Y.COM</text><text x="895.1" y="31.9" textLength="170.4" lengthAdjust="spacingAndGlyphs" stroke="#d48080">FOREX4Y.COM</text><text x="354.3" y="65.7" textLength="156.4" lengthAdjust="spacingAndGlyphs" stroke="#80a498">FOREX4Y.NET</text><text x="650.3" y="65.7" textLength="156.4" lengthAdjust="spacingAndGlyphs" stroke="#80a498">FOREX4Y.NET</text><text x="951.0" y="65.6" textLength="156.4" lengthAdjust="spacingAndGlyphs" stroke="#80a498">FOREX4Y.NET</text><text x="250.8" y="121.6" textLength="162.4" lengthAdjust="spacingAndGlyphs" stroke="#8080c4">FOREX4S.NET</text><text x="549.8" y="121.6" textLength="162.4" lengthAdjust="spacingAndGlyphs" stroke="#8080c4">FOREX4S.NET</text><text x="850.8" y="116.7" textLength="162.4" lengthAdjust="spacingAndGlyphs" stroke="#8080c4">FOREX4S.NET</text><text x="293.5" y="156.2" textLength="170.4" lengthAdjust="spacingAndGlyphs" stroke="#d48080">FOREX4Y.COM</text><text x="592.5" y="156.2" textLength="170.4" lengthAdjust="spacingAndGlyphs" stroke="#d48080">FOREX4Y.COM</text><text x="895.1" y="152.2" textLength="170.4" lengthAdjust="spacingAndGlyphs" stroke="#d48080">FOREX4Y.COM</text><text x="356.5" y="190.2" textLength="156.4" lengthAdjust="spacingAndGlyphs" stroke="#80a498">FOREX4Y.NET</text><text x="652.5" y="190.2" textLength="156.4" lengthAdjust="spacingAndGlyphs" stroke="#80a498">FOREX4Y.NET</text><text x="952.0" y="188.2" textLength="156.4" lengthAdjust="spacingAndGlyphs" stroke="#80a498">FOREX4Y.NET</text><text x="251.9" y="246.0" textLength="162.4" lengthAdjust="spacingAndGlyphs" stroke="#8080c4">FOREX4S.NET</text><text x="550.9" y="246.0" textLength="162.4" lengthAdjust="spacingAndGlyphs" stroke="#8080c4">FOREX4S.NET</text><text x="851.7" y="246.0" textLength="162.4" lengthAdjust="spacingAndGlyphs" stroke="#8080c4">FOREX4S.NET</text><text x="295.4" y="282.2" textLength="170.4" lengthAdjust="spacingAndGlyphs" stroke="#d48080">FOREX4Y.COM</text><text x="594.4" y="282.2" textLength="170.4" lengthAdjust="spacingAndGlyphs" stroke="#d48080">FOREX4Y.COM</text><text x="894.1" y="280.7" textLength="170.4" lengthAdjust="spacingAndGlyphs" stroke="#d48080">FOREX4Y.COM</text><text x="354.3" y="315.2" textLength="156.4" lengthAdjust="spacingAndGlyphs" stroke="#80a498">FOREX4Y.NET</text><text x="650.3" y="315.2" textLength="156.4" lengthAdjust="spacingAndGlyphs" stroke="#80a498">FOREX4Y.NET</text><text x="950.5" y="315.4" textLength="156.4" lengthAdjust="spacingAndGlyphs" stroke="#80a498">FOREX4Y.NET</text><text x="251.5" y="371.8" textLength="162.4" lengthAdjust="spacingAndGlyphs" stroke="#8080c4">FOREX4S.NET</text><text x="550.5" y="371.8" textLength="162.4" lengthAdjust="spacingAndGlyphs" stroke="#8080c4">FOREX4S.NET</text><text x="851.0" y="370.2" textLength="162.4" lengthAdjust="spacingAndGlyphs" stroke="#8080c4">FOREX4S.NET</text><text x="294.3" y="408.1" textLength="170.4" lengthAdjust="spacingAndGlyphs" stroke="#d48080">FOREX4Y.COM</text><text x="593.3" y="408.1" textLength="170.4" lengthAdjust="spacingAndGlyphs" stroke="#d48080">FOREX4Y.COM</text><text x="893.5" y="407.8" textLength="170.4" lengthAdjust="spacingAndGlyphs" stroke="#d48080">FOREX4Y.COM</text><text x="355.3" y="443.2" textLength="156.4" lengthAdjust="spacingAndGlyphs" stroke="#80a498">FOREX4Y.NET</text><text x="651.3" y="443.2" textLength="156.4" lengthAdjust="spacingAndGlyphs" stroke="#80a498">FOREX4Y.NET</text><text x="951.0" y="439.6" textLength="156.4" lengthAdjust="spacingAndGlyphs" stroke="#80a498">FOREX4Y.NET</text><text x="254.1" y="501.2" textLength="162.4" lengthAdjust="spacingAndGlyphs" stroke="#8080c4">FOREX4S.NET</text><text x="553.1" y="501.2" textLength="162.4" lengthAdjust="spacingAndGlyphs" stroke="#8080c4">FOREX4S.NET</text><text x="851.7" y="495.2" textLength="162.4" lengthAdjust="spacingAndGlyphs" stroke="#8080c4">FOREX4S.NET</text><text x="297.1" y="537.9" textLength="170.4" lengthAdjust="spacingAndGlyphs" stroke="#d48080">FOREX4Y.COM</text><text x="596.1" y="537.9" textLength="170.4" lengthAdjust="spacingAndGlyphs" stroke="#d48080">FOREX4Y.COM</text><text x="894.1" y="531.0" textLength="170.4" lengthAdjust="spacingAndGlyphs" stroke="#d48080">FOREX4Y.COM</text><text x="356.3" y="571.4" textLength="156.4" lengthAdjust="spacingAndGlyphs" stroke="#80a498">FOREX4Y.NET</text><text x="652.3" y="571.4" textLength="156.4" lengthAdjust="spacingAndGlyphs" stroke="#80a498">FOREX4Y.NET</text><text x="952.0" y="564.7" textLength="156.4" lengthAdjust="spacingAndGlyphs" stroke="#80a498">FOREX4Y.NET</text><text x="258.1" y="628.9" textLength="162.4" lengthAdjust="spacingAndGlyphs" stroke="#8080c4">FOREX4S.NET</text><text x="557.1" y="628.9" textLength="162.4" lengthAdjust="spacingAndGlyphs" stroke="#8080c4">FOREX4S.NET</text><text x="853.5" y="625.2" textLength="162.4" lengthAdjust="spacingAndGlyphs" stroke="#8080c4">FOREX4S.NET</text><text x="300.5" y="666.2" textLength="170.4" lengthAdjust="spacingAndGlyphs" stroke="#d48080">FOREX4Y.COM</text><text x="599.5" y="666.2" textLength="170.4" lengthAdjust="spacingAndGlyphs" stroke="#d48080">FOREX4Y.COM</text><text x="896.5" y="661.2" textLength="170.4" lengthAdjust="spacingAndGlyphs" stroke="#d48080">FOREX4Y.COM</text><text x="359.5" y="699.2" textLength="156.4" lengthAdjust="spacingAndGlyphs" stroke="#80a498">FOREX4Y.NET</text><text x="655.5" y="699.2" textLength="156.4" lengthAdjust="spacingAndGlyphs" stroke="#80a498">FOREX4Y.NET</text><text x="952.5" y="694.2" textLength="156.4" lengthAdjust="spacingAndGlyphs" stroke="#80a498">FOREX4Y.NET</text></g><g fill="#fff" stroke="#fff" stroke-width="4.2"><text x="294.3" y="30.4" textLength="170.4" lengthAdjust="spacingAndGlyphs">FOREX4Y.COM</text><text x="593.3" y="30.4" textLength="170.4" lengthAdjust="spacingAndGlyphs">FOREX4Y.COM</text><text x="895.1" y="31.9" textLength="170.4" lengthAdjust="spacingAndGlyphs">FOREX4Y.COM</text><text x="354.3" y="65.7" textLength="156.4" lengthAdjust="spacingAndGlyphs">FOREX4Y.NET</text><text x="650.3" y="65.7" textLength="156.4" lengthAdjust="spacingAndGlyphs">FOREX4Y.NET</text><text x="951.0" y="65.6" textLength="156.4" lengthAdjust="spacingAndGlyphs">FOREX4Y.NET</text><text x="250.8" y="121.6" textLength="162.4" lengthAdjust="spacingAndGlyphs">FOREX4S.NET</text><text x="549.8" y="121.6" textLength="162.4" lengthAdjust="spacingAndGlyphs">FOREX4S.NET</text><text x="850.8" y="116.7" textLength="162.4" lengthAdjust="spacingAndGlyphs">FOREX4S.NET</text><text x="293.5" y="156.2" textLength="170.4" lengthAdjust="spacingAndGlyphs">FOREX4Y.COM</text><text x="592.5" y="156.2" textLength="170.4" lengthAdjust="spacingAndGlyphs">FOREX4Y.COM</text><text x="895.1" y="152.2" textLength="170.4" lengthAdjust="spacingAndGlyphs">FOREX4Y.COM</text><text x="356.5" y="190.2" textLength="156.4" lengthAdjust="spacingAndGlyphs">FOREX4Y.NET</text><text x="652.5" y="190.2" textLength="156.4" lengthAdjust="spacingAndGlyphs">FOREX4Y.NET</text><text x="952.0" y="188.2" textLength="156.4" lengthAdjust="spacingAndGlyphs">FOREX4Y.NET</text><text x="251.9" y="246.0" textLength="162.4" lengthAdjust="spacingAndGlyphs">FOREX4S.NET</text><text x="550.9" y="246.0" textLength="162.4" lengthAdjust="spacingAndGlyphs">FOREX4S.NET</text><text x="851.7" y="246.0" textLength="162.4" lengthAdjust="spacingAndGlyphs">FOREX4S.NET</text><text x="295.4" y="282.2" textLength="170.4" lengthAdjust="spacingAndGlyphs">FOREX4Y.COM</text><text x="594.4" y="282.2" textLength="170.4" lengthAdjust="spacingAndGlyphs">FOREX4Y.COM</text><text x="894.1" y="280.7" textLength="170.4" lengthAdjust="spacingAndGlyphs">FOREX4Y.COM</text><text x="354.3" y="315.2" textLength="156.4" lengthAdjust="spacingAndGlyphs">FOREX4Y.NET</text><text x="650.3" y="315.2" textLength="156.4" lengthAdjust="spacingAndGlyphs">FOREX4Y.NET</text><text x="950.5" y="315.4" textLength="156.4" lengthAdjust="spacingAndGlyphs">FOREX4Y.NET</text><text x="251.5" y="371.8" textLength="162.4" lengthAdjust="spacingAndGlyphs">FOREX4S.NET</text><text x="550.5" y="371.8" textLength="162.4" lengthAdjust="spacingAndGlyphs">FOREX4S.NET</text><text x="851.0" y="370.2" textLength="162.4" lengthAdjust="spacingAndGlyphs">FOREX4S.NET</text><text x="294.3" y="408.1" textLength="170.4" lengthAdjust="spacingAndGlyphs">FOREX4Y.COM</text><text x="593.3" y="408.1" textLength="170.4" lengthAdjust="spacingAndGlyphs">FOREX4Y.COM</text><text x="893.5" y="407.8" textLength="170.4" lengthAdjust="spacingAndGlyphs">FOREX4Y.COM</text><text x="355.3" y="443.2" textLength="156.4" lengthAdjust="spacingAndGlyphs">FOREX4Y.NET</text><text x="651.3" y="443.2" textLength="156.4" lengthAdjust="spacingAndGlyphs">FOREX4Y.NET</text><text x="951.0" y="439.6" textLength="156.4" lengthAdjust="spacingAndGlyphs">FOREX4Y.NET</text><text x="254.1" y="501.2" textLength="162.4" lengthAdjust="spacingAndGlyphs">FOREX4S.NET</text><text x="553.1" y="501.2" textLength="162.4" lengthAdjust="spacingAndGlyphs">FOREX4S.NET</text><text x="851.7" y="495.2" textLength="162.4" lengthAdjust="spacingAndGlyphs">FOREX4S.NET</text><text x="297.1" y="537.9" textLength="170.4" lengthAdjust="spacingAndGlyphs">FOREX4Y.COM</text><text x="596.1" y="537.9" textLength="170.4" lengthAdjust="spacingAndGlyphs">FOREX4Y.COM</text><text x="894.1" y="531.0" textLength="170.4" lengthAdjust="spacingAndGlyphs">FOREX4Y.COM</text><text x="356.3" y="571.4" textLength="156.4" lengthAdjust="spacingAndGlyphs">FOREX4Y.NET</text><text x="652.3" y="571.4" textLength="156.4" lengthAdjust="spacingAndGlyphs">FOREX4Y.NET</text><text x="952.0" y="564.7" textLength="156.4" lengthAdjust="spacingAndGlyphs">FOREX4Y.NET</text><text x="258.1" y="628.9" textLength="162.4" lengthAdjust="spacingAndGlyphs">FOREX4S.NET</text><text x="557.1" y="628.9" textLength="162.4" lengthAdjust="spacingAndGlyphs">FOREX4S.NET</text><text x="853.5" y="625.2" textLength="162.4" lengthAdjust="spacingAndGlyphs">FOREX4S.NET</text><text x="300.5" y="666.2" textLength="170.4" lengthAdjust="spacingAndGlyphs">FOREX4Y.COM</text><text x="599.5" y="666.2" textLength="170.4" lengthAdjust="spacingAndGlyphs">FOREX4Y.COM</text><text x="896.5" y="661.2" textLength="170.4" lengthAdjust="spacingAndGlyphs">FOREX4Y.COM</text><text x="359.5" y="699.2" textLength="156.4" lengthAdjust="spacingAndGlyphs">FOREX4Y.NET</text><text x="655.5" y="699.2" textLength="156.4" lengthAdjust="spacingAndGlyphs">FOREX4Y.NET</text><text x="952.5" y="694.2" textLength="156.4" lengthAdjust="spacingAndGlyphs">FOREX4Y.NET</text></g></g></g>
  <g id="wmt"><g fill="#fff" opacity="0.2"><rect x="292.3" y="4.7" width="174" height="31"/><rect x="591.3" y="4.7" width="174" height="31"/><rect x="893.1" y="6.2" width="174" height="31"/><rect x="352.3" y="40.0" width="160" height="31"/><rect x="648.3" y="40.0" width="160" height="31"/><rect x="949.0" y="39.9" width="160" height="31"/><rect x="248.8" y="95.9" width="166" height="31"/><rect x="547.8" y="95.9" width="166" height="31"/><rect x="848.8" y="91.0" width="166" height="31"/><rect x="291.5" y="130.5" width="174" height="31"/><rect x="590.5" y="130.5" width="174" height="31"/><rect x="893.1" y="126.5" width="174" height="31"/><rect x="354.5" y="164.5" width="160" height="31"/><rect x="650.5" y="164.5" width="160" height="31"/><rect x="950.0" y="162.5" width="160" height="31"/><rect x="249.9" y="220.3" width="166" height="31"/><rect x="548.9" y="220.3" width="166" height="31"/><rect x="849.7" y="220.3" width="166" height="31"/></g><g font-family="Liberation Sans" font-weight="bold" font-size="29.5" letter-spacing="4" stroke-linejoin="round"><g fill="none" stroke-width="5.6"><text x="294.3" y="30.4" textLength="170.4" lengthAdjust="spacingAndGlyphs" stroke="#002a66">FOREX4Y.COM</text><text x="593.3" y="30.4" textLength="170.4" lengthAdjust="spacingAndGlyphs" stroke="#002a66">FOREX4Y.COM</text><text x="895.1" y="31.9" textLength="170.4" lengthAdjust="spacingAndGlyphs" stroke="#002a66">FOREX4Y.COM</text><text x="354.3" y="65.7" textLength="156.4" lengthAdjust="spacingAndGlyphs" stroke="#002a66">FOREX4Y.NET</text><text x="650.3" y="65.7" textLength="156.4" lengthAdjust="spacingAndGlyphs" stroke="#002a66">FOREX4Y.NET</text><text x="951.0" y="65.6" textLength="156.4" lengthAdjust="spacingAndGlyphs" stroke="#002a66">FOREX4Y.NET</text><text x="250.8" y="121.6" textLength="162.4" lengthAdjust="spacingAndGlyphs" stroke="#002a66">FOREX4S.NET</text><text x="549.8" y="121.6" textLength="162.4" lengthAdjust="spacingAndGlyphs" stroke="#002a66">FOREX4S.NET</text><text x="850.8" y="116.7" textLength="162.4" lengthAdjust="spacingAndGlyphs" stroke="#002a66">FOREX4S.NET</text><text x="293.5" y="156.2" textLength="170.4" lengthAdjust="spacingAndGlyphs" stroke="#002a66">FOREX4Y.COM</text><text x="592.5" y="156.2" textLength="170.4" lengthAdjust="spacingAndGlyphs" stroke="#002a66">FOREX4Y.COM</text><text x="895.1" y="152.2" textLength="170.4" lengthAdjust="spacingAndGlyphs" stroke="#002a66">FOREX4Y.COM</text><text x="356.5" y="190.2" textLength="156.4" lengthAdjust="spacingAndGlyphs" stroke="#002a66">FOREX4Y.NET</text><text x="652.5" y="190.2" textLength="156.4" lengthAdjust="spacingAndGlyphs" stroke="#002a66">FOREX4Y.NET</text><text x="952.0" y="188.2" textLength="156.4" lengthAdjust="spacingAndGlyphs" stroke="#002a66">FOREX4Y.NET</text><text x="251.9" y="246.0" textLength="162.4" lengthAdjust="spacingAndGlyphs" stroke="#002a66">FOREX4S.NET</text><text x="550.9" y="246.0" textLength="162.4" lengthAdjust="spacingAndGlyphs" stroke="#002a66">FOREX4S.NET</text><text x="851.7" y="246.0" textLength="162.4" lengthAdjust="spacingAndGlyphs" stroke="#002a66">FOREX4S.NET</text></g><g fill="#fff" stroke="#fff" stroke-width="4.2"><text x="294.3" y="30.4" textLength="170.4" lengthAdjust="spacingAndGlyphs">FOREX4Y.COM</text><text x="593.3" y="30.4" textLength="170.4" lengthAdjust="spacingAndGlyphs">FOREX4Y.COM</text><text x="895.1" y="31.9" textLength="170.4" lengthAdjust="spacingAndGlyphs">FOREX4Y.COM</text><text x="354.3" y="65.7" textLength="156.4" lengthAdjust="spacingAndGlyphs">FOREX4Y.NET</text><text x="650.3" y="65.7" textLength="156.4" lengthAdjust="spacingAndGlyphs">FOREX4Y.NET</text><text x="951.0" y="65.6" textLength="156.4" lengthAdjust="spacingAndGlyphs">FOREX4Y.NET</text><text x="250.8" y="121.6" textLength="162.4" lengthAdjust="spacingAndGlyphs">FOREX4S.NET</text><text x="549.8" y="121.6" textLength="162.4" lengthAdjust="spacingAndGlyphs">FOREX4S.NET</text><text x="850.8" y="116.7" textLength="162.4" lengthAdjust="spacingAndGlyphs">FOREX4S.NET</text><text x="293.5" y="156.2" textLength="170.4" lengthAdjust="spacingAndGlyphs">FOREX4Y.COM</text><text x="592.5" y="156.2" textLength="170.4" lengthAdjust="spacingAndGlyphs">FOREX4Y.COM</text><text x="895.1" y="152.2" textLength="170.4" lengthAdjust="spacingAndGlyphs">FOREX4Y.COM</text><text x="356.5" y="190.2" textLength="156.4" lengthAdjust="spacingAndGlyphs">FOREX4Y.NET</text><text x="652.5" y="190.2" textLength="156.4" lengthAdjust="spacingAndGlyphs">FOREX4Y.NET</text><text x="952.0" y="188.2" textLength="156.4" lengthAdjust="spacingAndGlyphs">FOREX4Y.NET</text><text x="251.9" y="246.0" textLength="162.4" lengthAdjust="spacingAndGlyphs">FOREX4S.NET</text><text x="550.9" y="246.0" textLength="162.4" lengthAdjust="spacingAndGlyphs">FOREX4S.NET</text><text x="851.7" y="246.0" textLength="162.4" lengthAdjust="spacingAndGlyphs">FOREX4S.NET</text></g></g></g>
 </defs>
 <use href="#wmg" clip-path="url(#cbody)" opacity="0.45"/>
 <use href="#wmt" clip-path="url(#ctitle)" opacity="0.1"/>
</svg>

<!-- right frame over dialog 2 -->
<div style="position:absolute;z-index:20;left:1093px;top:0;width:3px;height:750px;background:#000"></div>
<div style="position:absolute;z-index:20;left:1096px;top:0;width:304px;height:750px;background:#fff"></div>
</body></html>
